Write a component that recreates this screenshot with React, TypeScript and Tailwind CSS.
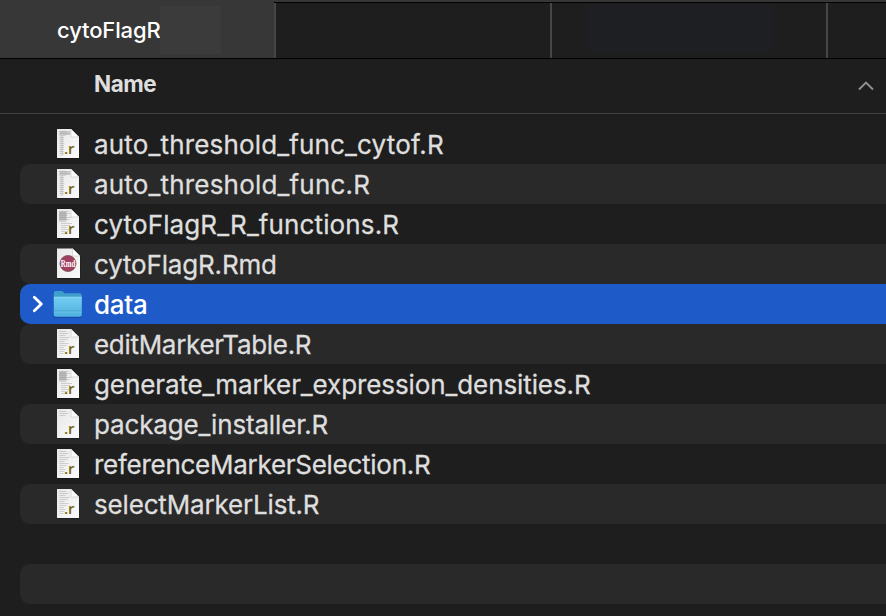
import React from "react";

type Kind = "r" | "rmd" | "folder" | "none";

interface Entry {
  name: string;
  kind: Kind;
  density?: number;
  tracking: string;
}

const entries: Entry[] = [
  { name: "auto_threshold_func_cytof.R", kind: "r", density: 2, tracking: "tracking-[0.16px]" },
  { name: "auto_threshold_func.R", kind: "r", density: 2, tracking: "tracking-[0.18px]" },
  { name: "cytoFlagR_R_functions.R", kind: "r", density: 3, tracking: "tracking-[0.12px]" },
  { name: "cytoFlagR.Rmd", kind: "rmd", tracking: "tracking-[-0.17px]" },
  { name: "data", kind: "folder", tracking: "tracking-[-0.25px]" },
  { name: "editMarkerTable.R", kind: "r", density: 1, tracking: "tracking-[-0.3px]" },
  { name: "generate_marker_expression_densities.R", kind: "r", density: 3, tracking: "tracking-[-0.1px]" },
  { name: "package_installer.R", kind: "r", density: 0, tracking: "tracking-[-0.16px]" },
  { name: "referenceMarkerSelection.R", kind: "r", density: 1, tracking: "tracking-[-0.27px]" },
  { name: "selectMarkerList.R", kind: "r", density: 1, tracking: "tracking-[-0.17px]" },
  { name: "", kind: "none", tracking: "" },
  { name: "", kind: "none", tracking: "" },
];

const lineWidths = [7, 9, 6, 10, 8, 5, 9, 7, 4, 6, 5, 4, 6];

function Page({ children }: { children?: React.ReactNode }) {
  return (
    <>
      <path d="M2.5 1.5h14.5l7.5 8v21.5h-22z" fill="#000" opacity=".25" />
      <path d="M2 1h14l8 8v21h-22z" fill="url(#paper)" />
      {children}
      <path d="M16 1v8h8z" fill="#fbfbfb" stroke="#c4c4c4" strokeWidth=".6" />
    </>
  );
}

function RFile({ density }: { density: number }) {
  const count = density === 0 ? 3 : 12;
  return (
    <svg className="block h-8 w-[30px]" viewBox="0 0 30 32">
      <Page>
        {density === 2 && <path d="M4.500 3h11v4h-11z" fill="#bbb" opacity=".75" />}
        {density === 2 && <path d="M5.500 8h3v20h-3z" fill="#ccc" opacity=".6" />}
        {density === 3 && <path d="M4 3.500h7.500v9h-7.500z" fill="#aaa" opacity=".75" />}
        {lineWidths.slice(0, count).map((w, i) => (
          <path
            key={i}
            d={`M${density === 3 && i > 5 ? 6 : 4.5} ${3.5 + i * 2}h${density === 2 && i > 2 ? 4 : w + (density > 2 ? 2 : 0)}`}
            stroke="#999"
            strokeWidth=".8"
            opacity=".5"
          />
        ))}
        <text x="9" y="26" className="fill-[#6f6510] font-['Open_Sans',sans-serif] text-[15px] font-semibold">
          .r
        </text>
      </Page>
    </svg>
  );
}

function RmdFile() {
  return (
    <svg className="block h-8 w-[30px]" viewBox="0 0 30 32">
      <path d="M2.500 1h15l8 8v22h-23z" fill="#000" opacity=".25" />
      <path d="M2 .500h15.500l7.500 7.500v22h-23z" fill="url(#paper)" />
      <path d="M17.500.500v7.500h7.500z" fill="#fff" stroke="#c4c4c4" strokeWidth=".6" />
      <circle cx="13" cy="15.500" r="8" fill="#a03f62" stroke="#71504f" strokeWidth=".8" />
      <text
        x="13"
        y="18.500"
        textAnchor="middle"
        textLength="14.500"
        lengthAdjust="spacingAndGlyphs"
        className="fill-white font-['Liberation_Serif',serif] text-[9.5px] font-bold"
      >
        Rmd
      </text>
    </svg>
  );
}

function Folder() {
  return (
    <svg className="block h-8 w-[30px]" viewBox="0 0 30 32">
      <path d="M1 29h27.500" stroke="#123c87" strokeWidth="1.500" opacity=".6" />
      <path d="M.8 5.200Q.8 3 2.800 3h5.500q1 0 1.800.8l1 1q.6.500 1.700.5h14Q28.800 5.300 28.800 7.500V13H.8z" fill="#3f9fca" />
      <path d="M.8 9H28.800V26.800q0 2-2 2H2.800q-2 0-2-2z" fill="url(#folder)" />
      <path d="M.8 9.200h28" stroke="#94dcf6" strokeWidth=".8" />
      <path d="M.8 23h28" stroke="#3f9ac4" strokeWidth=".8" />
      <path d="M.8 24h28" stroke="#78c9ea" strokeWidth=".7" />
    </svg>
  );
}

function Row({ entry, index }: { entry: Entry; index: number }) {
  const selected = entry.kind === "folder";
  const background = selected
    ? "bg-[#1f5ac9] text-white font-medium"
    : index % 2
      ? "bg-[#292929] text-[#dedede] [-webkit-text-stroke:0.3px_#dedede]"
      : "text-[#dedede] [-webkit-text-stroke:0.3px_#dedede]";
  return (
    <li className={`flex h-10 items-center rounded-l-[10px] ${background}`}>
      <span className="flex w-[33px] shrink-0 pl-[11px]">
        {selected && (
          <svg className="h-[18px] w-[14px]" viewBox="0 0 14 18" fill="none">
            <path d="M3.300 2.200 10.300 9 3.300 15.800" stroke="white" strokeWidth="2.800" strokeLinecap="round" strokeLinejoin="round" />
          </svg>
        )}
      </span>
      <span className={`w-[41px] shrink-0 [-webkit-text-stroke:0px] ${selected ? "" : "pl-[2px]"}`}>
        {entry.kind === "r" && <RFile density={entry.density ?? 1} />}
        {entry.kind === "rmd" && <RmdFile />}
        {selected && <Folder />}
      </span>
      <span className={`whitespace-nowrap pt-[2px] text-[26px] leading-9 ${entry.tracking}`}>{entry.name}</span>
    </li>
  );
}

export default function App() {
  return (
    <div className="flex h-[616px] w-[886px] flex-col overflow-hidden bg-[#1e1e1e] font-['Inter',sans-serif]">
      <svg className="absolute h-0 w-0" aria-hidden="true">
        <defs>
          <linearGradient id="paper" x1="0" y1="0" x2="1" y2="1">
            <stop stopColor="#e8e8e8" />
            <stop offset="1" stopColor="#fafafa" />
          </linearGradient>
          <linearGradient id="folder" x1="0" y1="0" x2="0" y2="1">
            <stop stopColor="#74cdf1" />
            <stop offset="1" stopColor="#4fb0df" />
          </linearGradient>
        </defs>
      </svg>
      <nav className="flex h-[59px] shrink-0 border-b border-black bg-[#373737]">
        <div className="flex w-[274px] shrink-0 items-start pl-[57px] pt-[6px]">
          <span className="w-[103px] whitespace-nowrap pt-[8px] text-[22px] font-medium leading-8 tracking-[-0.13px] text-white">cytoFlagR</span>
          <span className="h-12 w-[61px] bg-[#3b3b3b]" />
        </div>
        <div className="mt-[2px] flex flex-1 border-t border-black bg-[#1e1e1e]">
          <div className="w-[278px] border-x-2 border-[#464646]" />
          <div className="w-[276px] border-r-2 border-[#464646] pl-[35px] pt-[2px]">
            <div className="h-12 w-[186px] bg-[#1e1f22]" />
          </div>
        </div>
      </nav>
      <header className="flex h-[55px] shrink-0 items-center justify-between border-b border-[#404040] pl-[94px] pr-[12.5px]">
        <span className="pb-[4px] text-[22.500px] font-bold leading-8 tracking-[-0.5px] text-[#dedede]">Name</span>
        <svg className="h-[12px] w-[16px]" viewBox="0 0 16 12" fill="none">
          <path d="M1 9.500 8 2.500l7 7" stroke="#919191" strokeWidth="1.900" />
        </svg>
      </header>
      <ul className="pl-5 pt-[10px]">
        {entries.map((entry, index) => (
          <Row key={index} entry={entry} index={index} />
        ))}
      </ul>
    </div>
  );
}
